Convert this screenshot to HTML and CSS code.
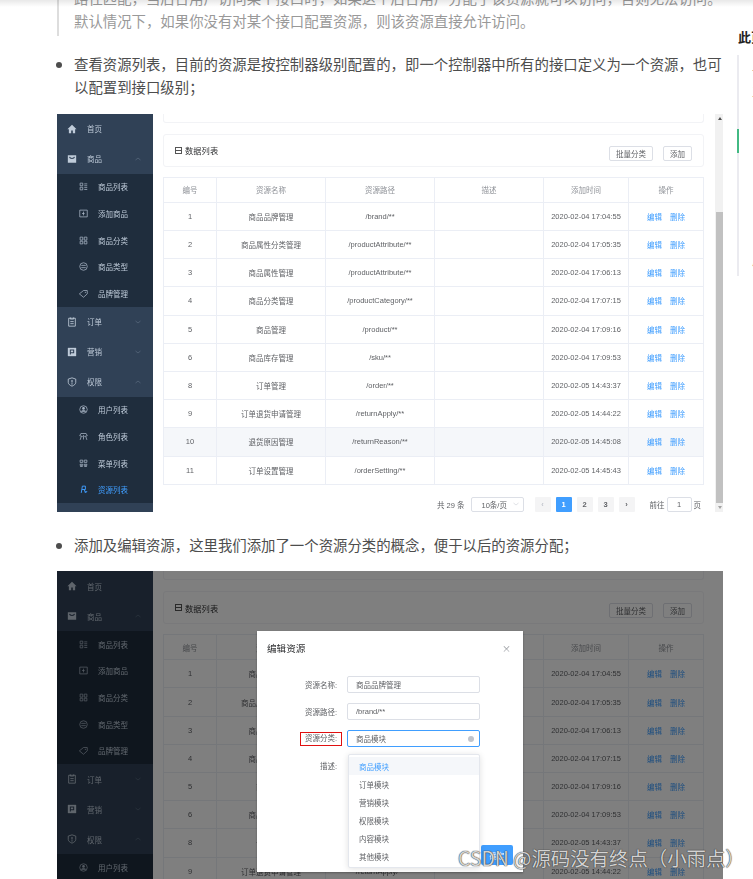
FILE: index.html
```html
<!DOCTYPE html>
<html lang="zh-CN">
<head>
    <meta charset="UTF-8">
    <meta name="viewport" content="width=device-width, initial-scale=1.0">
    <title>资源管理</title>
    <link rel="stylesheet" href="styles.css">
</head>
<body>
    <svg class="icon-defs" width="0" height="0">
        <symbol id="i-home" viewBox="0 0 24 24"><path fill="currentColor" d="M12 2 1 12.5h3.5V22H10v-6.5h4V22h5.5V12.5H23z"/></symbol>
        <symbol id="i-bag" viewBox="0 0 24 24"><path fill="currentColor" d="M2 3h20v18H2z"/><path fill="none" stroke="#304156" stroke-width="2.5" d="M6 7c1 5 11 5 12 0"/></symbol>
        <symbol id="i-list" viewBox="0 0 24 24"><path fill="none" stroke="currentColor" stroke-width="2" d="M3 3h7v7H3zM3 14h7v7H3zM14 5h8M14 10h8M14 15h8M14 20h8"/></symbol>
        <symbol id="i-add" viewBox="0 0 24 24"><path fill="none" stroke="currentColor" stroke-width="2" d="M2 3h20v18H2zM12 7v10M8 12h7"/></symbol>
        <symbol id="i-grid" viewBox="0 0 24 24"><path fill="none" stroke="currentColor" stroke-width="2" d="M3 3h7v8H3zM14 3h7v8h-7zM3 14h7v7H3zM14 14h7v7h-7z"/></symbol>
        <symbol id="i-type" viewBox="0 0 24 24"><circle cx="12" cy="12" r="10" fill="none" stroke="currentColor" stroke-width="2"/><path stroke="currentColor" stroke-width="2" d="M6 9h12M6 15h12"/></symbol>
        <symbol id="i-tag" viewBox="0 0 24 24"><path fill="none" stroke="currentColor" stroke-width="2" d="M1 13 12 4h10v9L12 22z"/><circle cx="17" cy="8.5" r="1.5" fill="currentColor"/></symbol>
        <symbol id="i-order" viewBox="0 0 24 24"><path fill="none" stroke="currentColor" stroke-width="2" d="M4 3h16v19H4zM8 1v4h8V1M8 11h8M8 16h8"/></symbol>
        <symbol id="i-market" viewBox="0 0 24 24"><path fill="currentColor" d="M2 2h20v20H2z"/><path fill="none" stroke="#304156" stroke-width="2.5" d="M8 7h8v7H8zM8 14v4"/></symbol>
        <symbol id="i-shield" viewBox="0 0 24 24"><path fill="none" stroke="currentColor" stroke-width="2" d="M12 2 21 5v8c0 4-4 7-9 9-5-2-9-5-9-9V5z"/><path stroke="currentColor" stroke-width="2.5" d="M12 7v6M12 15v3"/></symbol>
        <symbol id="i-user" viewBox="0 0 24 24"><circle cx="12" cy="12" r="10" fill="none" stroke="currentColor" stroke-width="2"/><circle cx="12" cy="9" r="3.5" fill="currentColor"/><path fill="currentColor" d="M5 18c2-5 12-5 14 0z"/></symbol>
        <symbol id="i-role" viewBox="0 0 24 24"><path fill="none" stroke="currentColor" stroke-width="2" d="M5 4h14l3 6-7 2-3-3-3 3-7-2zM6 12 3 21M18 12l3 9M12 11v9"/></symbol>
        <symbol id="i-menu" viewBox="0 0 24 24"><path fill="none" stroke="currentColor" stroke-width="2" d="M3 3h7v6H3zM14 3h7v6h-7zM3 14h7v3H3zM14 14h7v3h-7zM3 20h7M14 20h7"/></symbol>
        <symbol id="i-res" viewBox="0 0 24 24"><path fill="none" stroke="currentColor" stroke-width="2.5" d="M6 21 9 3h8v9H8M14 12l3 9"/><path fill="currentColor" d="M17 15l6 3-6 3z"/></symbol>
        <symbol id="i-up" viewBox="0 0 12 12"><path fill="none" stroke="currentColor" d="M1 8l5-4 5 4"/></symbol>
        <symbol id="i-down" viewBox="0 0 12 12"><path fill="none" stroke="currentColor" d="M1 4l5 4 5-4"/></symbol>
    </svg>

    <div class="page">
        <main class="article">
            <blockquote class="note">
                <p>路径匹配&#xFF0C;当后台用户访问某个接口时&#xFF0C;如果这个后台用户分配了该资源就可以访问&#xFF0C;否则无法访问。</p>
                <p>默认情况下&#xFF0C;如果你没有对某个接口配置资源&#xFF0C;则该资源直接允许访问。</p>
            </blockquote>

            <ul class="points">
                <li>查看资源列表&#xFF0C;目前的资源是按控制器级别配置的&#xFF0C;即一个控制器中所有的接口定义为一个资源&#xFF0C;也可以配置到接口级别&#xFF1B;</li>
            </ul>

            <div class="shot shot-list">
                <nav class="sidebar">
                    <div class="menu-row"><svg class="menu-icon"><use href="#i-home"/></svg>首页</div>
                    <div class="menu-row"><svg class="menu-icon"><use href="#i-bag"/></svg>商品<svg class="chevron"><use href="#i-up"/></svg></div>
                    <div class="submenu">
                        <div class="sub-row"><svg class="sub-icon"><use href="#i-list"/></svg>商品列表</div>
                        <div class="sub-row"><svg class="sub-icon"><use href="#i-add"/></svg>添加商品</div>
                        <div class="sub-row"><svg class="sub-icon"><use href="#i-grid"/></svg>商品分类</div>
                        <div class="sub-row"><svg class="sub-icon"><use href="#i-type"/></svg>商品类型</div>
                        <div class="sub-row"><svg class="sub-icon"><use href="#i-tag"/></svg>品牌管理</div>
                    </div>
                    <div class="menu-row"><svg class="menu-icon"><use href="#i-order"/></svg>订单<svg class="chevron"><use href="#i-down"/></svg></div>
                    <div class="menu-row"><svg class="menu-icon"><use href="#i-market"/></svg>营销<svg class="chevron"><use href="#i-down"/></svg></div>
                    <div class="menu-row"><svg class="menu-icon"><use href="#i-shield"/></svg>权限<svg class="chevron"><use href="#i-up"/></svg></div>
                    <div class="submenu">
                        <div class="sub-row"><svg class="sub-icon"><use href="#i-user"/></svg>用户列表</div>
                        <div class="sub-row"><svg class="sub-icon"><use href="#i-role"/></svg>角色列表</div>
                        <div class="sub-row"><svg class="sub-icon"><use href="#i-menu"/></svg>菜单列表</div>
                        <div class="sub-row sub-active"><svg class="sub-icon"><use href="#i-res"/></svg>资源列表</div>
                    </div>
                </nav>

                <div class="content">
                    <div class="card-stub"></div>
                    <div class="card-head">
                        <span class="card-title"><span class="title-mark"></span>数据列表</span>
                        <span class="card-actions">
                            <span class="mini-btn">批量分类</span>
                            <span class="mini-btn">添加</span>
                        </span>
                    </div>
                    <table class="grid">
                        <colgroup>
                            <col class="col-id"><col class="col-name"><col class="col-path">
                            <col class="col-desc"><col class="col-time"><col class="col-ops">
                        </colgroup>
                        <thead>
                            <tr><th>编号</th><th>资源名称</th><th>资源路径</th><th>描述</th><th>添加时间</th><th>操作</th></tr>
                        </thead>
                        <tbody>
                            <tr><td>1</td><td>商品品牌管理</td><td>/brand/**</td><td></td><td>2020-02-04 17:04:55</td><td class="ops"><a>编辑</a><a>删除</a></td></tr>
                            <tr><td>2</td><td>商品属性分类管理</td><td>/productAttribute/**</td><td></td><td>2020-02-04 17:05:35</td><td class="ops"><a>编辑</a><a>删除</a></td></tr>
                            <tr><td>3</td><td>商品属性管理</td><td>/productAttribute/**</td><td></td><td>2020-02-04 17:06:13</td><td class="ops"><a>编辑</a><a>删除</a></td></tr>
                            <tr><td>4</td><td>商品分类管理</td><td>/productCategory/**</td><td></td><td>2020-02-04 17:07:15</td><td class="ops"><a>编辑</a><a>删除</a></td></tr>
                            <tr><td>5</td><td>商品管理</td><td>/product/**</td><td></td><td>2020-02-04 17:09:16</td><td class="ops"><a>编辑</a><a>删除</a></td></tr>
                            <tr><td>6</td><td>商品库存管理</td><td>/sku/**</td><td></td><td>2020-02-04 17:09:53</td><td class="ops"><a>编辑</a><a>删除</a></td></tr>
                            <tr><td>8</td><td>订单管理</td><td>/order/**</td><td></td><td>2020-02-05 14:43:37</td><td class="ops"><a>编辑</a><a>删除</a></td></tr>
                            <tr><td>9</td><td>订单退货申请管理</td><td>/returnApply/**</td><td></td><td>2020-02-05 14:44:22</td><td class="ops"><a>编辑</a><a>删除</a></td></tr>
                            <tr class="row-hover"><td>10</td><td>退货原因管理</td><td>/returnReason/**</td><td></td><td>2020-02-05 14:45:08</td><td class="ops"><a>编辑</a><a>删除</a></td></tr>
                            <tr><td>11</td><td>订单设置管理</td><td>/orderSetting/**</td><td></td><td>2020-02-05 14:45:43</td><td class="ops"><a>编辑</a><a>删除</a></td></tr>
                        </tbody>
                    </table>
                    <div class="pager">
                        <span class="pager-total">共 29 条</span>
                        <span class="pager-size">10条/页<svg class="pager-caret"><use href="#i-down"/></svg></span>
                        <span class="pager-btn pager-off">‹</span>
                        <span class="pager-btn pager-on">1</span>
                        <span class="pager-btn">2</span>
                        <span class="pager-btn">3</span>
                        <span class="pager-btn">›</span>
                        <span class="pager-jump">前往<span class="pager-input">1</span>页</span>
                    </div>
                </div>

                <div class="scrollbar">
                    <span class="scroll-up"></span>
                    <span class="scroll-thumb"></span>
                    <span class="scroll-down"></span>
                </div>
            </div>

            <ul class="points">
                <li>添加及编辑资源&#xFF0C;这里我们添加了一个资源分类的概念&#xFF0C;便于以后的资源分配&#xFF1B;</li>
            </ul>

            <div class="shot shot-edit">
                <nav class="sidebar">
                    <div class="menu-row"><svg class="menu-icon"><use href="#i-home"/></svg>首页</div>
                    <div class="menu-row"><svg class="menu-icon"><use href="#i-bag"/></svg>商品<svg class="chevron"><use href="#i-up"/></svg></div>
                    <div class="submenu">
                        <div class="sub-row"><svg class="sub-icon"><use href="#i-list"/></svg>商品列表</div>
                        <div class="sub-row"><svg class="sub-icon"><use href="#i-add"/></svg>添加商品</div>
                        <div class="sub-row"><svg class="sub-icon"><use href="#i-grid"/></svg>商品分类</div>
                        <div class="sub-row"><svg class="sub-icon"><use href="#i-type"/></svg>商品类型</div>
                        <div class="sub-row"><svg class="sub-icon"><use href="#i-tag"/></svg>品牌管理</div>
                    </div>
                    <div class="menu-row"><svg class="menu-icon"><use href="#i-order"/></svg>订单<svg class="chevron"><use href="#i-down"/></svg></div>
                    <div class="menu-row"><svg class="menu-icon"><use href="#i-market"/></svg>营销<svg class="chevron"><use href="#i-down"/></svg></div>
                    <div class="menu-row"><svg class="menu-icon"><use href="#i-shield"/></svg>权限<svg class="chevron"><use href="#i-up"/></svg></div>
                    <div class="submenu">
                        <div class="sub-row"><svg class="sub-icon"><use href="#i-user"/></svg>用户列表</div>
                    </div>
                </nav>

                <div class="content">
                    <div class="card-stub"></div>
                    <div class="card-head">
                        <span class="card-title"><span class="title-mark"></span>数据列表</span>
                        <span class="card-actions">
                            <span class="mini-btn">批量分类</span>
                            <span class="mini-btn">添加</span>
                        </span>
                    </div>
                    <table class="grid">
                        <colgroup>
                            <col class="col-id"><col class="col-name"><col class="col-path">
                            <col class="col-desc"><col class="col-time"><col class="col-ops">
                        </colgroup>
                        <thead>
                            <tr><th>编号</th><th>资源名称</th><th>资源路径</th><th>描述</th><th>添加时间</th><th>操作</th></tr>
                        </thead>
                        <tbody>
                            <tr><td>1</td><td>商品品牌管理</td><td>/brand/**</td><td></td><td>2020-02-04 17:04:55</td><td class="ops"><a>编辑</a><a>删除</a></td></tr>
                            <tr><td>2</td><td>商品属性分类管理</td><td>/productAttribute/**</td><td></td><td>2020-02-04 17:05:35</td><td class="ops"><a>编辑</a><a>删除</a></td></tr>
                            <tr><td>3</td><td>商品属性管理</td><td>/productAttribute/**</td><td></td><td>2020-02-04 17:06:13</td><td class="ops"><a>编辑</a><a>删除</a></td></tr>
                            <tr><td>4</td><td>商品分类管理</td><td>/productCategory/**</td><td></td><td>2020-02-04 17:07:15</td><td class="ops"><a>编辑</a><a>删除</a></td></tr>
                            <tr><td>5</td><td>商品管理</td><td>/product/**</td><td></td><td>2020-02-04 17:09:16</td><td class="ops"><a>编辑</a><a>删除</a></td></tr>
                            <tr><td>6</td><td>商品库存管理</td><td>/sku/**</td><td></td><td>2020-02-04 17:09:53</td><td class="ops"><a>编辑</a><a>删除</a></td></tr>
                            <tr><td>8</td><td>订单管理</td><td>/order/**</td><td></td><td>2020-02-05 14:43:37</td><td class="ops"><a>编辑</a><a>删除</a></td></tr>
                            <tr><td>9</td><td>订单退货申请管理</td><td>/returnApply/**</td><td></td><td>2020-02-05 14:44:22</td><td class="ops"><a>编辑</a><a>删除</a></td></tr>
                        </tbody>
                    </table>
                </div>

                <div class="mask"></div>

                <div class="dialog">
                    <div class="dialog-head">
                        <span>编辑资源</span>
                        <span class="dialog-close">×</span>
                    </div>
                    <div class="form-row">
                        <span class="form-label">资源名称:</span>
                        <span class="form-input">商品品牌管理</span>
                    </div>
                    <div class="form-row">
                        <span class="form-label">资源路径:</span>
                        <span class="form-input">/brand/**</span>
                    </div>
                    <div class="form-row">
                        <span class="form-label"><span class="label-marked">资源分类:</span></span>
                        <span class="form-input input-focus">商品模块<span class="input-clear"></span></span>
                    </div>
                    <div class="form-row">
                        <span class="form-label">描述:</span>
                    </div>
                    <div class="dialog-foot"><span class="primary-btn">确定</span></div>

                    <ul class="dropdown">
                        <li class="drop-on">商品模块</li>
                        <li>订单模块</li>
                        <li>营销模块</li>
                        <li>权限模块</li>
                        <li>内容模块</li>
                        <li>其他模块</li>
                    </ul>
                </div>
            </div>
        </main>

        <aside class="side-toc">
            <div class="toc-title">此页内容</div>
            <div class="toc-list">
                <span class="toc-active"></span>
                <span class="toc-item">二级目录</span>
                <span class="toc-item">三级目录</span>
                <span class="toc-item toc-last">总结</span>
            </div>
        </aside>

        <div class="top-shade"></div>
        <div class="watermark">CSDN @源码没有终点&#xFF08;小雨点&#xFF09;</div>
    </div>
</body>
</html>
```
FILE: styles.css
```css
* {
    margin: 0;
    padding: 0;
    box-sizing: border-box;
}

html, body {
    height: 100%;
    overflow: hidden;
    background: white;
}

body {
    font-family: "Noto Sans CJK SC", "Liberation Sans", sans-serif;
    color: #4d4d4d;
}

.icon-defs {
    position: absolute;
}

.page {
    position: relative;
    display: flex;
    height: 879px;
    padding-left: 57px;
    overflow: hidden;
}

.top-shade {
    position: absolute;
    top: 0;
    left: 0;
    right: 0;
    height: 7px;
    background: linear-gradient(rgba(0,0,0,0.09), rgba(0,0,0,0));
}

.watermark {
    position: absolute;
    left: 458px;
    top: 846px;
    font-size: 19.4px;
    line-height: 24px;
    white-space: nowrap;
    color: rgba(255,255,255,0.78);
    text-shadow: 0 0 1px #333, 0 0 1px #333;
}

/* article */
.article {
    width: 666px;
    flex: none;
    margin-top: -14px;
}

.note {
    border-left: 2px solid #ddd;
    padding-left: 15px;
    font-size: 14.4px;
    line-height: 23.4px;
    height: 50px;
    color: #999;
    white-space: nowrap;
}

.points {
    list-style: disc;
    padding-left: 17px;
    font-size: 14.4px;
    line-height: 23.4px;
    margin: 16px 0 15px;
}

.shot + .points {
    margin-top: 21px;
}

.side-toc {
    margin-left: 14px;
    width: 16px;
    flex: none;
    overflow: hidden;
    white-space: nowrap;
}

.toc-title {
    margin-top: 28px;
    padding-left: 1px;
    font-size: 13px;
    line-height: 18px;
    font-weight: 700;
    color: #222;
}

.toc-list {
    position: relative;
    display: flex;
    flex-direction: column;
    margin-top: 9px;
    height: 221px;
    padding: 4px 0 8px 13px;
    border-left: 2px solid #ebebf0;
    font-size: 12px;
    line-height: 14px;
    color: #777;
}

.toc-item {
    margin-bottom: 12px;
}

.toc-last {
    margin-top: auto;
    margin-bottom: 0;
}

.toc-active {
    position: absolute;
    left: -2px;
    top: 74px;
    width: 2px;
    height: 24px;
    background: #42b983;
}

/* screenshots */
.shot {
    position: relative;
    display: flex;
    background: white;
    overflow: hidden;
    filter: blur(0.4px);
    font-family: "Liberation Sans", "Noto Sans CJK SC", sans-serif;
    font-size: 7.5px;
    color: #606266;
}

.shot-list {
    height: 398px;
}

.shot-edit {
    height: 308px;
}

.sidebar {
    width: 96px;
    flex: none;
    background: #304156;
    color: #bfcbd9;
}

.menu-row {
    display: flex;
    align-items: center;
    height: 29.9px;
    padding-left: 10px;
}

.menu-icon {
    width: 10px;
    height: 10px;
    margin-right: 10px;
    color: #bfcbd9;
}

.chevron {
    width: 6px;
    height: 6px;
    margin-left: auto;
    margin-right: 12px;
    color: #6f7f93;
}

.submenu {
    background: #1f2d3d;
}

.sub-row {
    display: flex;
    align-items: center;
    height: 26.67px;
    padding-left: 22px;
}

.sub-icon {
    width: 9px;
    height: 9px;
    margin-right: 10px;
    color: #a9b6c6;
}

.sub-active, .sub-active .sub-icon {
    color: #409eff;
}

.content {
    flex: 1;
    padding: 0 20px 0 10px;
}

.shot-list .content {
    padding-right: 11px;
}

.card-stub {
    height: 9px;
    border: 1px solid #f2f3f6;
    border-top: none;
    border-radius: 0 0 3px 3px;
    margin-bottom: 11px;
}

.card-head {
    display: flex;
    align-items: center;
    justify-content: space-between;
    height: 33px;
    border: 1px solid #f2f3f6;
    border-radius: 3px;
    padding: 0 11px;
    margin-bottom: 10px;
}

.card-title {
    display: flex;
    align-items: center;
    font-size: 8.3px;
    color: #303133;
}

.title-mark {
    width: 7px;
    height: 7px;
    border: 1px solid #555;
    margin-right: 3px;
    background: linear-gradient(#555, #555) center / 100% 1px no-repeat;
}

.card-actions {
    display: flex;
    gap: 10px;
    margin-top: 6px;
}

.mini-btn {
    display: flex;
    align-items: center;
    justify-content: center;
    height: 15px;
    padding: 0 6px;
    border: 1px solid #dcdfe6;
    border-radius: 2px;
    color: #606266;
}

.grid {
    width: 540px;
    border-collapse: collapse;
    table-layout: fixed;
}

.col-id { width: 53px; }
.col-name, .col-path, .col-desc { width: 109px; }
.col-time { width: 85px; }
.col-ops { width: 75px; }

.grid th, .grid td {
    border: 1px solid #ebeef5;
    text-align: center;
    font-weight: 400;
    white-space: nowrap;
}

.grid th {
    height: 25px;
    color: #909399;
}

.grid td {
    height: 28.2px;
}

.row-hover td {
    background: #f5f7fa;
}

.ops a {
    color: #409eff;
    margin: 0 4px;
}

.pager {
    display: flex;
    align-items: center;
    justify-content: flex-end;
    margin-top: 12px;
    height: 15px;
    color: #606266;
}

.pager-total {
    margin-right: 6px;
}

.pager-size {
    display: flex;
    align-items: center;
    justify-content: space-between;
    width: 53px;
    height: 15px;
    border: 1px solid #dcdfe6;
    border-radius: 2px;
    padding: 0 4px 0 10px;
    margin-right: 11px;
}

.pager-caret {
    width: 6px;
    height: 6px;
    color: #c0c4cc;
}

.pager-btn {
    display: flex;
    align-items: center;
    justify-content: center;
    width: 16px;
    height: 15px;
    margin-right: 5px;
    background: #f4f4f5;
    border-radius: 1px;
    font-weight: 700;
}

.pager-off {
    color: #c0c4cc;
}

.pager-on {
    background: #409eff;
    color: white;
}

.pager-jump {
    display: flex;
    align-items: center;
    margin-left: 10px;
    margin-right: 3px;
    white-space: nowrap;
}

.pager-input {
    display: flex;
    align-items: center;
    justify-content: center;
    width: 25px;
    height: 15px;
    margin: 0 2px;
    border: 1px solid #dcdfe6;
    border-radius: 2px;
}

.scrollbar {
    width: 9px;
    flex: none;
    display: flex;
    flex-direction: column;
    align-items: center;
    background: #f1f1f1;
}

.scroll-up, .scroll-down {
    width: 0;
    height: 0;
    border-left: 2px solid transparent;
    border-right: 2px solid transparent;
}

.scroll-up {
    margin-top: 3px;
    border-bottom: 3px solid #505050;
}

.scroll-thumb {
    width: 8px;
    height: 291px;
    margin-top: 92px;
    background: #c1c1c1;
}

.scroll-down {
    margin-top: 3px;
    border-top: 3px solid #a3a3a3;
}

/* edit dialog */
.mask {
    position: absolute;
    inset: 0;
    background: rgba(0,0,0,0.5);
}

.dialog {
    position: absolute;
    left: 200px;
    top: 60px;
    width: 266px;
    height: 241px;
    display: flex;
    flex-direction: column;
    background: white;
    box-shadow: 0 1px 2px rgba(0,0,0,0.3);
}

.dialog-head {
    display: flex;
    align-items: center;
    justify-content: space-between;
    height: 34px;
    padding: 0 12px 0 10px;
    margin-bottom: 11px;
    font-family: "Noto Sans CJK SC", sans-serif;
    font-size: 9.6px;
    color: #303133;
}

.dialog-close {
    font-size: 9px;
    color: #909399;
}

.form-row {
    display: flex;
    align-items: center;
    height: 17px;
    margin-bottom: 10px;
}

.form-label {
    width: 80px;
    margin-right: 10px;
    text-align: right;
    flex: none;
}

.label-marked {
    display: inline-block;
    border: 1px solid #e01010;
    padding: 0 4px;
    margin-right: -5px;
    line-height: 12px;
}

.form-input {
    position: relative;
    display: flex;
    align-items: center;
    width: 133px;
    height: 17.5px;
    padding-left: 8px;
    border: 1px solid #dcdfe6;
    border-radius: 2px;
}

.input-focus {
    border-color: #409eff;
}

.input-clear {
    position: absolute;
    right: 5px;
    width: 6px;
    height: 6px;
    border-radius: 50%;
    background: #c0c4cc;
}

.dialog-foot {
    display: flex;
    justify-content: flex-end;
    margin-top: auto;
    padding: 0 10px 7px;
}

.primary-btn {
    display: flex;
    align-items: center;
    justify-content: center;
    width: 32px;
    height: 20px;
    border-radius: 2px;
    background: #409eff;
    color: white;
}

.dropdown {
    position: absolute;
    left: 91px;
    top: 123px;
    width: 132px;
    height: 114px;
    padding: 2px 0;
    list-style: none;
    background: white;
    border: 1px solid #e4e7ed;
    border-radius: 2px;
    box-shadow: 0 1px 6px rgba(0,0,0,0.12);
}

.dropdown li {
    display: flex;
    align-items: center;
    height: 18px;
    padding-left: 10px;
}

.dropdown .drop-on {
    background: #f5f7fa;
    color: #409eff;
}
```
